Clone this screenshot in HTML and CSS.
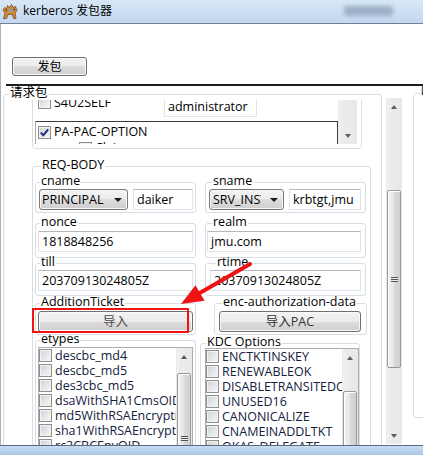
FILE: index.html
```html
<!DOCTYPE html>
<html lang="zh">
<head>
<meta charset="utf-8">
<title>kerberos 发包器</title>
<link rel="stylesheet" href="styles.css">
</head>
<body>
<div class="window">
  <header class="titlebar">
    <svg class="appicon" width="16" height="17" viewBox="0 0 16 17">
      <path d="M1.5 15.5 L3 10 L1 7 L2.5 4.5 L4.5 6 L5.5 2.5 L7.5 4.5 L9.5 1.5 L11 4.5 L13.5 3.5 L15 7.5 L13 10 L14 15.5 L11.5 15.5 L10.5 11.5 L6 11.5 L4.5 15.5 Z" fill="#d48a34" stroke="#6b3e12" stroke-width="0.7"/>
      <path d="M6 6 L9 5 L12 7 L10 9 L7 9 Z" fill="#9a9a9a"/>
      <circle cx="4.3" cy="7.3" r="0.8" fill="#2a1a08"/>
      <circle cx="12.3" cy="6.5" r="0.8" fill="#2a1a08"/>
    </svg>
    <span class="title">kerberos 发包器</span>
    <span class="caption-btns"></span>
  </header>

  <main class="client">
    <div class="toolbar">
      <button class="btn btn-send">发包</button>
    </div>
    <div class="sep"></div>

    <div class="panes">
      <fieldset class="gb gb-req">
        <legend>请求包</legend>
        <div class="scrollview">
          <div class="box-top">
            <div class="box-top-main">
              <div class="s4u-row">
                <span class="chk chk-s4u"><span class="cb"></span>S4U2SELF</span>
                <div class="tb tb-admin">administrator</div>
              </div>
              <div class="tree">
                <div class="tree-item"><span class="cb"><svg class="tick" width="11" height="11" viewBox="0 0 11 11"><path d="M1.8 5.6 L4.3 8.2 L9.2 2.4" fill="none" stroke="#22307a" stroke-width="2"/></svg></span>PA-PAC-OPTION</div>
                <div class="tree-item tree-child"><span class="cb"></span>Claim</div>
              </div>
            </div>
            <div class="vs vs-top">
              <span class="vs-btn"><span class="arr-down"></span></span>
            </div>
          </div>

          <fieldset class="gb gb-body">
            <legend>REQ-BODY</legend>

            <div class="brow r1">
              <fieldset class="gb g-l h1">
                <legend>cname</legend>
                <div class="gc gc-pair">
                  <div class="combo c-principal"><span class="ctext">PRINCIPAL</span><span class="carr"></span></div>
                  <div class="tb tb-cname">daiker</div>
                </div>
              </fieldset>
              <fieldset class="gb g-sname h1">
                <legend>sname</legend>
                <div class="gc gc-pair gc-sname">
                  <div class="combo c-srv"><span class="ctext">SRV_INST</span><span class="carr"></span></div>
                  <div class="tb tb-sname">krbtgt,jmu</div>
                </div>
              </fieldset>
            </div>

            <div class="brow r2">
              <fieldset class="gb g-l h2">
                <legend>nonce</legend>
                <div class="gc gc-full">
                  <div class="tb tb-wide">1818848256</div>
                </div>
              </fieldset>
              <fieldset class="gb g-realm h2">
                <legend>realm</legend>
                <div class="gc gc-realm">
                  <div class="tb tb-realm">jmu.com</div>
                </div>
              </fieldset>
            </div>

            <div class="brow r3">
              <fieldset class="gb g-l h3">
                <legend>till</legend>
                <div class="gc gc-full gc-up">
                  <div class="tb tb-wide">20370913024805Z</div>
                </div>
              </fieldset>
              <fieldset class="gb g-rtime h3">
                <legend>rtime</legend>
                <div class="gc gc-rtime gc-up">
                  <div class="tb tb-rtime">20370913024805Z</div>
                </div>
              </fieldset>
            </div>

            <div class="brow r4">
              <fieldset class="gb g-l h4">
                <legend>AdditionTicket</legend>
                <div class="gc gc-full">
                  <button class="btn btn-import">导入</button>
                </div>
              </fieldset>
              <fieldset class="gb g-enc h4">
                <legend>enc-authorization-data</legend>
                <div class="gc gc-enc">
                  <button class="btn btn-pac">导入PAC</button>
                </div>
              </fieldset>
            </div>

            <div class="brow r5">
              <fieldset class="gb g-l h5">
                <legend>etypes</legend>
                <div class="gc gc-full gc-up">
                  <div class="listbox lb-etypes">
                    <div class="lb-items">
                      <div class="lb-item"><span class="cb"></span>descbc_md4</div>
                      <div class="lb-item"><span class="cb"></span>descbc_md5</div>
                      <div class="lb-item"><span class="cb"></span>des3cbc_md5</div>
                      <div class="lb-item"><span class="cb"></span>dsaWithSHA1CmsOID</div>
                      <div class="lb-item"><span class="cb"></span>md5WithRSAEncryption</div>
                      <div class="lb-item"><span class="cb"></span>sha1WithRSAEncryption</div>
                      <div class="lb-item"><span class="cb"></span>rc2CBCEnvOID</div>
                    </div>
                    <div class="vs vs-list">
                      <span class="vs-btn"><span class="arr-up"></span></span>
                      <span class="vs-track"><span class="vs-thumb thumb-etypes"><span class="grip"></span></span></span>
                    </div>
                  </div>
                </div>
              </fieldset>
              <fieldset class="gb g-kdc h5">
                <legend>KDC Options</legend>
                <div class="gc gc-kdc">
                  <div class="listbox lb-kdc">
                    <div class="lb-items">
                      <div class="lb-item"><span class="cb"></span>ENCTKTINSKEY</div>
                      <div class="lb-item"><span class="cb"></span>RENEWABLEOK</div>
                      <div class="lb-item"><span class="cb"></span>DISABLETRANSITEDCHECK</div>
                      <div class="lb-item"><span class="cb"></span>UNUSED16</div>
                      <div class="lb-item"><span class="cb"></span>CANONICALIZE</div>
                      <div class="lb-item"><span class="cb"></span>CNAMEINADDLTKT</div>
                      <div class="lb-item"><span class="cb"></span>OKAS_DELEGATE</div>
                    </div>
                    <div class="vs vs-list">
                      <span class="vs-btn"><span class="arr-up"></span></span>
                      <span class="vs-track"><span class="vs-thumb thumb-kdc"><span class="grip"></span></span></span>
                    </div>
                  </div>
                </div>
              </fieldset>
            </div>
          </fieldset>
        </div>
      </fieldset>

      <div class="vs vs-big">
        <span class="vs-btn"><span class="arr-up"></span></span>
        <span class="vs-track"><span class="vs-thumb thumb-big"><span class="grip"></span></span></span>
        <span class="vs-btn"><span class="arr-down"></span></span>
      </div>

      <fieldset class="gb gb-resp">
        <legend>响应包</legend>
      </fieldset>
    </div>
  </main>

  <footer class="frame-bottom"></footer>
</div>

<svg class="overlay" width="423" height="455" viewBox="0 0 423 455">
  <rect x="33" y="309" width="155" height="23" fill="none" stroke="#ee1414" stroke-width="2"/>
  <line x1="250" y1="264" x2="198" y2="294" stroke="#ee1414" stroke-width="4" stroke-linecap="round"/>
  <polygon points="181,304 195.5,285.2 204.5,300.8" fill="#ee1414"/>
</svg>
</body>
</html>
```

FILE: styles.css
```css
* { box-sizing: border-box; }
html, body { margin: 0; padding: 0; }
body {
  width: 423px;
  height: 455px;
  overflow: hidden;
  position: relative;
  background: #fff;
  color: #000;
  font-family: "Open Sans", "Noto Sans CJK SC", sans-serif;
  font-size: 12.5px;
}

.window { display: flex; flex-direction: column; height: 455px; }

/* ---------- title bar ---------- */
.titlebar {
  flex: none;
  height: 24px;
  display: flex;
  align-items: center;
  background: linear-gradient(#d8e7f7, #c2d8ef);
  border-bottom: 1px solid #6f8196;
  padding-bottom: 1px;
}
.appicon { flex: none; margin-left: 2px; }
.title { margin-left: 5px; font-size: 12px; line-height: 16px; white-space: nowrap; }
.caption-btns {
  margin-left: auto;
  margin-right: 30px;
  width: 49px;
  height: 10px;
  border-radius: 3px;
  background: #9bb0c7;
  filter: blur(2px);
}

/* ---------- client ---------- */
.client {
  flex: none;
  height: 421px;
  border-left: 1px solid #a6b2bf;
  background: #fff;
  overflow: hidden;
}
.toolbar { height: 60px; padding: 33px 0 0 11px; }
.sep { height: 2px; margin-left: 5px; background: #1e1e1e; }

.frame-bottom {
  flex: none;
  height: 10px;
  border-top: 1px solid #56697e;
  background: linear-gradient(#c9ddf3, #a9c6e7);
}

/* ---------- generic controls ---------- */
.btn {
  display: flex;
  align-items: center;
  justify-content: center;
  padding: 0;
  margin: 0;
  border: 1px solid #707070;
  border-radius: 3px;
  background: linear-gradient(#f3f3f3 0, #ebebeb 50%, #dddddd 50%, #cfcfcf 100%);
  box-shadow: inset 0 0 0 1px #f8f8f8;
  font-family: inherit;
  font-size: 12.5px;
  color: #000;
  line-height: 14px;
}
.btn-send { width: 75px; height: 19px; font-size: 12px; }

.tb {
  height: 21px;
  border: 1px solid #dfe3ea;
  border-top-color: #b5b8c0;
  background: #fff;
  padding-left: 3px;
  line-height: 19px;
  white-space: nowrap;
  overflow: hidden;
}

.combo {
  height: 21px;
  display: flex;
  align-items: center;
  border: 1px solid #7a7a7a;
  border-radius: 3px;
  background: linear-gradient(#f3f3f3 0, #ebebeb 50%, #dddddd 50%, #cfcfcf 100%);
  box-shadow: inset 0 0 0 1px #f6f6f6;
  padding-left: 2px;
}
.ctext { flex: 1; min-width: 0; overflow: hidden; white-space: nowrap; line-height: 19px; }
.carr {
  flex: none;
  width: 0; height: 0;
  border-left: 4px solid transparent;
  border-right: 4px solid transparent;
  border-top: 4px solid #1a1a1a;
  margin: 1px 5px 0 4px;
}

.cb {
  flex: none;
  width: 13px;
  height: 13px;
  display: inline-flex;
  align-items: center;
  justify-content: center;
  border: 1px solid #8f8f8f;
  background: linear-gradient(135deg, #cfd1d4 0, #e6e7e8 55%, #f7f7f7 100%);
  box-shadow: inset 0 0 0 1px #f2f2f2;
}
.tick { display: block; }

/* scrollbars */
.vs {
  display: flex;
  flex-direction: column;
  background: linear-gradient(to right, #dcdcdc 0, #f4f4f4 1px, #ececec 3px, #e8e8e8 100%);
}
.vs-btn { flex: none; height: 17px; display: flex; align-items: center; justify-content: center; }
.vs-track { flex: 1; min-height: 0; overflow: hidden; }
.vs-thumb {
  display: flex;
  align-items: center;
  justify-content: center;
  margin: 0 1px;
  border: 1px solid #999;
  border-radius: 2px;
  background: linear-gradient(to right, #f4f4f4 0, #e6e6e6 45%, #d9d9d9 55%, #d0d0d0 100%);
  box-shadow: inset 1px 1px 0 #fff;
}
.grip {
  width: 7px;
  height: 5px;
  background: repeating-linear-gradient(to bottom, #505050 0 1px, #eeeeee 1px 2px);
}
.arr-up, .arr-down {
  width: 1px; height: 0;
  border-left: 3px solid transparent;
  border-right: 3px solid transparent;
}
.arr-up { border-bottom: 4px solid #5d5d5d; }
.arr-down { border-top: 4px solid #5d5d5d; }

/* ---------- group boxes ---------- */
.gb {
  margin: 0;
  padding: 0;
  min-width: 0;
  border: 1px solid #d5dfe5;
  border-radius: 3px;
  flex: none;
}
.gb > legend {
  padding: 0 1px 3px;
  margin-left: 4px;
  line-height: 12px;
  font-size: 12.5px;
  white-space: nowrap;
}

.panes { display: flex; align-items: flex-start; }

.gb-req { margin: 1px 0 0 2px; width: 379px; height: 400px; }
.gb-req > legend { margin-left: 5px; }
.scrollview { margin-top: -2px; height: 360px; overflow: hidden; padding-left: 28px; }

.vs-big { flex: none; width: 16px; height: 346px; margin: 12px 0 0 4px; }
.thumb-big { margin-top: 75px; height: 178px; }

.gb-resp { margin-left: 11px; width: 60px; height: 332px; }
.gb-resp > legend { margin-left: 6px; color: #000; }

/* top box (S4U / PA-PAC) */
.box-top {
  margin-top: -6px;
  width: 330px;
  display: flex;
  border: 1px solid #d5dfe5;
  border-radius: 3px;
  padding: 0 4px 4px 2px;
}
.box-top-main { width: 303px; flex: none; }
.s4u-row { height: 26px; display: flex; align-items: flex-start; }
.chk { display: flex; align-items: center; gap: 3px; line-height: 13px; white-space: nowrap; }
.chk-s4u { width: 126px; height: 13px; margin: 1px 0 0 3px; }
.tb-admin { width: 93px; margin-top: 1px; }
.tree {
  height: 23px;
  overflow: hidden;
  border-top: 1px solid #3b3b3b;
  border-right: 1px solid #3b3b3b;
  border-left: 1px solid #a9a9a9;
  padding: 2px 0 0 2px;
}
.tree-item { height: 16px; line-height: 16px; display: flex; align-items: center; gap: 3px; white-space: nowrap; }
.tree-child { padding-left: 41px; }
.vs-top { flex: 1; justify-content: flex-end; }

/* REQ-BODY */
.gb-body { margin-top: 10px; width: 339px; height: 320px; padding: 0 4px 0 2px; }
.gb-body > legend { margin-left: 6px; }

.brow { display: flex; }
.r1 { margin-top: 1px; }
.r2 { margin-top: 3px; }
.r3 { margin-top: -2px; }
.r4 { margin-top: 0; }
.r5 { margin-top: -2px; align-items: flex-start; }

.h1 { height: 38px; }
.h2 { height: 42px; }
.h3 { height: 40px; }
.h4 { height: 39px; }
.h5 { height: 140px; }

.g-l { width: 161px; }
.g-sname { width: 161px; margin-left: 9px; }
.g-sname > legend { margin-left: 6px; }
.g-realm { width: 161px; margin-left: 9px; }
.g-realm > legend { margin-left: 6px; }
.g-rtime { width: 161px; margin-left: 9px; }
.g-rtime > legend { margin-left: 10px; }
.g-enc { width: 153px; margin-left: 18px; }
.g-enc > legend { margin-left: 7px; }
.g-kdc { width: 160px; margin: 3px 0 0 4px; }
.g-kdc > legend { margin-left: 5px; }

.gc { display: flex; }
.gc-up { margin-top: -1px; }
.gc-pair { margin-top: -1px; gap: 5px; padding-left: 3px; }
.c-principal { width: 89px; }
.tb-cname { width: 60px; }
.c-srv { width: 75px; padding-left: 3px; }
.c-srv .carr { margin-left: 9px; }
.tb-sname { width: 72px; }

.gc-full { padding-left: 2px; }
.tb-wide { width: 155px; }
.gc-realm { padding-left: 1px; }
.tb-realm { width: 154px; }
.gc-rtime { padding-left: 4px; }
.tb-rtime { width: 151px; }

.btn-import { width: 155px; height: 21px; color: #4a4a4a; }
.gc-enc { padding-left: 4px; }
.btn-pac { width: 142px; height: 21px; color: #333; }

/* list boxes */
.listbox {
  display: flex;
  height: 120px;
  border: 1px solid #abadb3;
  background: #fff;
}
.lb-etypes { width: 155px; }
.gc-kdc { margin-top: -3px; padding-left: 4px; }
.lb-kdc { width: 154px; }
.lb-items { flex: 1; min-width: 0; overflow: hidden; }
.lb-item {
  height: 15px;
  line-height: 15px;
  display: flex;
  align-items: center;
  gap: 3px;
  white-space: nowrap;
  color: #14213d;
}
.vs-list { flex: none; width: 16px; }
.thumb-etypes { margin-top: 8px; height: 130px; }
.thumb-kdc { margin-top: 25px; height: 130px; }

/* annotation overlay */
.overlay { position: absolute; left: 0; top: 0; pointer-events: none; }
```
